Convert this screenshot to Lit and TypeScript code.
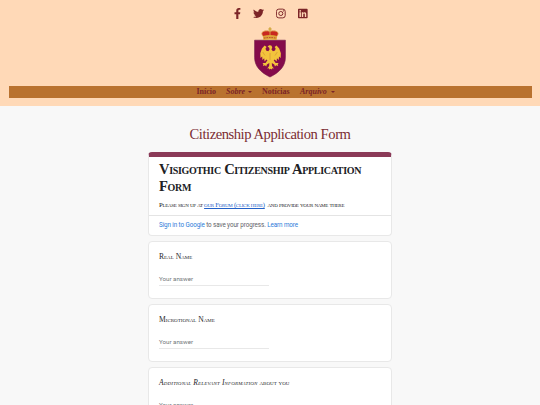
import { LitElement, css, html, nothing, svg } from 'lit';
import { customElement, property } from 'lit/decorators.js';

const FACEBOOK = svg`<path d="M279.14 288l14.22-92.66h-88.91v-60.13c0-25.35 12.42-50.06 52.24-50.06h40.42V6.26S260.43 0 225.36 0c-73.22 0-121.08 44.38-121.08 124.72v70.62H22.89V288h81.39v224h100.17V288z"/>`;
const TWITTER = svg`<path d="M459.37 151.716c.325 4.548.325 9.097.325 13.645 0 138.72-105.583 298.558-298.558 298.558-59.452 0-114.68-17.219-161.137-47.106 8.447.974 16.568 1.299 25.34 1.299 49.055 0 94.213-16.568 130.274-44.832-46.132-.975-84.792-31.188-98.112-72.772 6.498.974 12.995 1.624 19.818 1.624 9.421 0 18.843-1.3 27.614-3.573-48.081-9.747-84.143-51.98-84.143-102.985v-1.299c13.969 7.797 30.214 12.67 47.431 13.319-28.264-18.843-46.781-51.005-46.781-87.391 0-19.492 5.197-37.36 14.294-52.954 51.655 63.675 129.3 105.258 216.365 109.807-1.624-7.797-2.599-15.918-2.599-24.04 0-57.828 46.782-104.934 104.934-104.934 30.213 0 57.502 12.67 76.67 33.137 23.715-4.548 46.456-13.32 66.599-25.34-7.798 24.366-24.366 44.833-46.132 57.827 21.117-2.273 41.584-8.122 60.426-16.243-14.292 20.791-32.161 39.308-52.628 54.253z"/>`;
const INSTAGRAM = svg`
	<rect x="20" y="52" width="408" height="408" rx="112" fill="none" stroke="currentColor" stroke-width="44"/>
	<circle cx="224" cy="256" r="95" fill="none" stroke="currentColor" stroke-width="44"/>
	<circle cx="343" cy="137" r="27"/>`;
const LINKEDIN = svg`<path d="M416 32H31.9C14.3 32 0 46.5 0 64.3v383.4C0 465.5 14.3 480 31.9 480H416c17.6 0 32-14.5 32-32.3V64.3c0-17.8-14.4-32.3-32-32.3zM135.4 416H69V202.2h66.5V416zm-33.2-243c-21.3 0-38.5-17.3-38.5-38.5S80.9 96 102.2 96c21.2 0 38.5 17.3 38.5 38.5 0 21.3-17.2 38.5-38.5 38.5zm282.1 243h-66.4V312c0-24.8-.5-56.7-34.5-56.7-34.6 0-39.9 27-39.9 54.9V416h-66.4V202.2h63.7v29.2h.9c8.9-16.8 30.6-34.5 62.2-34.5 66.5 0 78.9 43.8 78.9 100.9V416z"/>`;

@customElement('site-crest')
export class SiteCrestElement extends LitElement {
	static styles = css`
		:host,
		svg {
			display: block;
		}
	`;

	render() {
		return html`
			<svg width="32" height="51" viewBox="0 0 32 51">
				<path
					d="M.6 13.2h30.8v17.3c0 9-6.4 15.2-15.4 19.5C7 45.7.6 39.5.6 30.5z"
					fill="#850b4b"
					stroke="#6e1546"
					stroke-width=".6"
				/>
				<!-- crown -->
				<path d="M9.2 9.500C5 4.500 11 2.800 16 4.200c5-1.400 11 .3 6.800 5.300z" fill="#c9281f" />
				<path
					d="M9.300 9.500C5 5 11 2.600 16 4.400c5-1.800 11 .6 6.700 5.100M16 4.400v5"
					fill="none"
					stroke="#dfb65a"
					stroke-width=".8"
				/>
				<path d="M15.4.2h1.200v1.200h1.100v1.100h-1.100v1.800h-1.200V2.500h-1.100V1.400h1.100z" fill="#cba12c" />
				<path d="M8.800 9q7.200-1.800 14.400 0l-.6 3.900q-6.600-1-13.200 0z" fill="#dda53a" />
				<path d="M10 11.100q6-1.200 12 0" stroke="#b5382a" stroke-width=".9" fill="none" stroke-dasharray="1.500 1" />
				<!-- eagle -->
				<g transform="translate(-1.9 0) scale(1.12 1)">
					<path
						d="M13.800 19.400l1.500-1.200 1.800.3.900 1.700-.7 2.200 1.300 1.800 1.900-.6.500-2-.9-1.700 1.700-1.500 2.400 3 1.500 4.800-.2 4.700-1.500-1.500-.2 3.500-1.600-1.700-.3 3.300-1.700-2-.9.700 1.700 2.700 2.700.1-.8 1.300.4 1.700-1.800-.7-1.100 1.200-.6-2-2.200-1.500.2 3 1.700 2.600-1.600-.3-.1 1.200-1.300-.8-1.300.8-.1-1.200-1.600.3 1.700-2.600.2-3-2.200 1.500-.6 2-1.100-1.200-1.800.7.4-1.700-.8-1.300 2.700-.1 1.700-2.700-.9-.7-1.700 2-.3-3.300-1.600 1.700-.2-3.500-1.500 1.500-.2-4.700 1.500-4.800 2.400-3 1.700 1.500-.9 1.700.5 2 1.900.6 1.200-1.600-.3-1.900z"
						fill="#f3c33c"
					/>
					<path d="M9.500 25l2 3.500M22.500 25l-2 3.500M16 26v7" stroke="#c98238" stroke-width=".5" />
				</g>
			</svg>
		`;
	}
}

@customElement('site-header')
export class SiteHeaderElement extends LitElement {
	static styles = css`
		:host {
			display: flex;
			flex-direction: column;
			align-items: center;
			box-sizing: border-box;
			height: 106px;
			padding: 8px 8.5px 0;
			background: #ffd9b7;
			color: #7b2427;
		}

		.social {
			display: flex;
			gap: 12.2px;
			height: 11px;
			margin: 0 0 8px 1.6px;
		}

		.social svg {
			display: block;
			height: 11px;
			fill: currentColor;
		}

		nav {
			display: flex;
			justify-content: center;
			align-self: stretch;
			box-sizing: border-box;
			height: 11.5px;
			margin-top: 8px;
			padding-right: 15.5px;
			background: #b9722f;
			font: bold 8px/11.5px 'Liberation Serif', serif;
		}

		.item {
			display: flex;
			align-items: center;
			justify-content: space-between;
			box-sizing: border-box;
			white-space: nowrap;
		}

		.home {
			width: 29.5px;
		}

		.about {
			width: 36px;
			padding-right: 10px;
		}

		.news {
			width: 38px;
		}

		.archive {
			width: 35px;
			margin-right: -7px;
		}

		.caret {
			border: 2px solid transparent;
			border-top-color: currentColor;
			border-bottom: 0;
		}

		.italic {
			font-style: italic;
		}
	`;

	render() {
		return html`
			<div class="social">
				<svg viewBox="0 0 320 512">${FACEBOOK}</svg>
				<svg viewBox="0 0 512 512">${TWITTER}</svg>
				<svg viewBox="0 0 448 512">${INSTAGRAM}</svg>
				<svg viewBox="0 0 448 512">${LINKEDIN}</svg>
			</div>
			<site-crest></site-crest>
			<nav>
				<span class="item home">Início</span>
				<span class="item italic about">Sobre <i class="caret"></i></span>
				<span class="item news">Notícias</span>
				<span class="item italic archive">Arquivo <i class="caret"></i></span>
			</nav>
		`;
	}
}

@customElement('form-question')
export class FormQuestionElement extends LitElement {
	static styles = css`
		:host {
			display: block;
			box-sizing: border-box;
			height: 58.4px;
			padding: 9px 10px 0;
			border: 1px solid #e8e8e8;
			border-radius: 4px;
			background: white;
		}

		.label {
			font: 7.6px/11px 'Liberation Serif', serif;
			font-variant: small-caps;
			color: #26272a;
		}

		.label em {
			letter-spacing: 0.15px;
		}

		.answer {
			width: 110px;
			height: 10px;
			margin-top: 13px;
			border-bottom: 1px solid #e8e8e8;
			font: 6.2px/9px Roboto, sans-serif;
			color: #73777b;
		}
	`;

	/**
	 * Leading part of the label, set in italics.
	 */
	@property()
	emphasis = '';

	@property()
	label = '';

	render() {
		return html`
			<div class="label">${this.emphasis ? html`<em>${this.emphasis}</em> ` : nothing}${this.label}</div>
			<div class="answer">Your answer</div>
		`;
	}
}

@customElement('app-root')
export class AppRootElement extends LitElement {
	static styles = css`
		:host {
			display: block;
			height: 405px;
			overflow: hidden;
			background: #f8f8f8;
		}

		.title {
			margin: 19.5px 0 9.5px;
			font: 14.6px/17px 'Liberation Serif', serif;
			letter-spacing: -0.45px;
			color: #7b2c32;
			text-align: center;
		}

		.form {
			display: flex;
			flex-direction: column;
			gap: 5px;
			width: 244px;
			margin: 0 auto;
		}

		.intro {
			box-sizing: border-box;
			height: 83.6px;
			border: 1px solid #e8e8e8;
			border-top: 5px solid #8b3a58;
			border-radius: 4px;
			background: white;
			font-family: 'Liberation Serif', serif;
			color: #202124;
		}

		.heading {
			margin: 4px 10px 0;
			font-size: 14.6px;
			line-height: 17px;
			font-weight: bold;
			font-variant: small-caps;
			letter-spacing: -0.32px;
			white-space: nowrap;
		}

		.description {
			margin: 5px 10px 0;
			font-size: 6.7px;
			line-height: 9px;
			font-variant: small-caps;
			letter-spacing: -0.28px;
			white-space: nowrap;
		}

		.description a {
			color: #2361c8;
			text-decoration: underline;
		}

		.signin {
			margin-top: 6px;
			padding: 0 10px;
			border-top: 1px solid #e4e4e4;
			font: 6.3px/18px Roboto, sans-serif;
			letter-spacing: -0.1px;
			color: #5f6368;
		}

		.signin a {
			color: #2b7bd9;
		}
	`;

	render() {
		return html`
			<site-header></site-header>
			<div class="title">Citizenship Application Form</div>
			<div class="form">
				<div class="intro">
					<div class="heading">Visigothic Citizenship Application<br />Form</div>
					<div class="description">
						Please sign up at <a>our Forum (click here)</a>&nbsp; and provide your name there
					</div>
					<div class="signin"><a>Sign in to Google</a> to save your progress. <a>Learn more</a></div>
				</div>
				<form-question label="Real Name"></form-question>
				<form-question label="Microtional Name"></form-question>
				<form-question emphasis="Additional Relevant Information" label="about you"></form-question>
			</div>
		`;
	}
}
